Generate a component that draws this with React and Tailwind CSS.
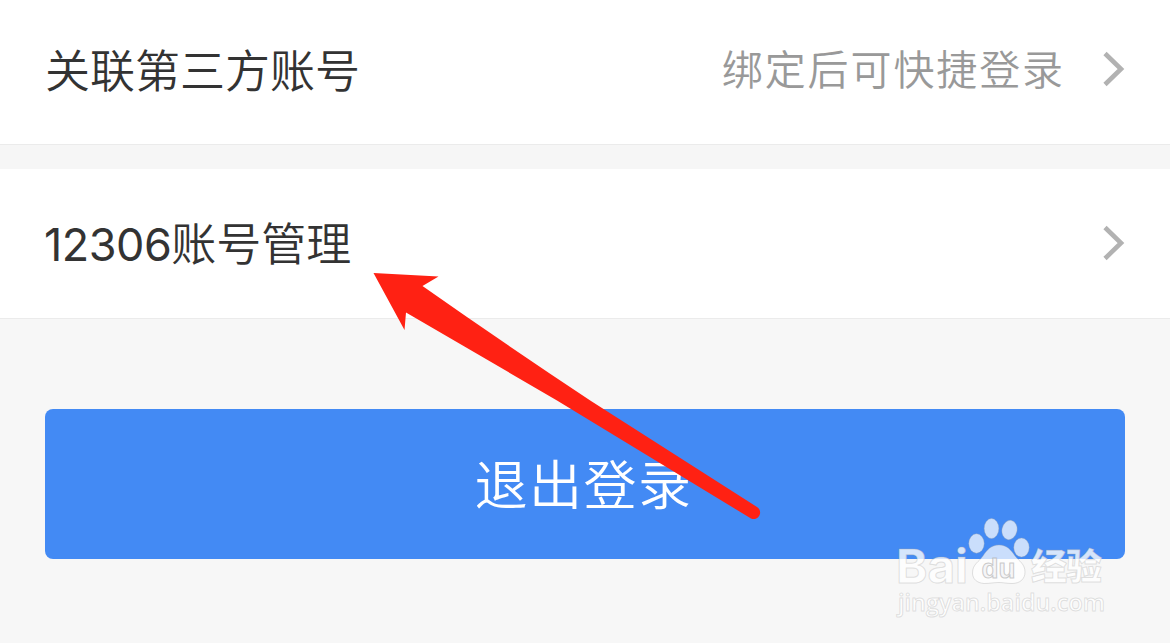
import React from "react";

function Chevron() {
  return (
    <svg className="mb-0.5 h-10 w-6 shrink-0" viewBox="0 0 24 40" fill="none" stroke="#b2b2b2" strokeWidth="4.6">
      <path d="M3 4.500 L19 20 L3 35.500" />
    </svg>
  );
}

function Row({ className, label, hint }) {
  return (
    <div className={`flex items-center justify-between border-b-[1.5px] border-[#ebebeb] bg-white pl-[45px] pr-[44px] ${className}`}>
      {label}
      <div className="flex items-center gap-[37px]">
        {hint}
        <Chevron />
      </div>
    </div>
  );
}

function Arrow() {
  return (
    <svg className="pointer-events-none absolute left-[360px] top-[260px] h-[270px] w-[410px]" viewBox="360 260 410 270">
      <path
        fill="#ff2113"
        d="M373.500 273 L438.500 276.500 L422.500 286 Q505 344 591 401 L757 507 A6.500 6.500 0 0 1 751 518.500 L557 400.500 L406 312.500 L404.500 330 Z"
      />
    </svg>
  );
}

function Watermark() {
  return (
    <svg
      className="pointer-events-none absolute left-[880px] top-[500px] h-[130px] w-[250px]"
      viewBox="880 500 250 130"
      fill="#fff"
      fillOpacity="0.72"
      stroke="#a9a9a9"
      strokeOpacity="0.35"
      strokeWidth="1"
    >
      <text x="896" y="582.500" fontFamily="Inter, sans-serif" fontWeight="700" fontSize="47" textLength="72" lengthAdjust="spacingAndGlyphs" fillOpacity="0.8">
        Bai
      </text>
      <ellipse cx="976.500" cy="543.500" rx="7.700" ry="9.700" />
      <ellipse cx="991.500" cy="528.500" rx="7.300" ry="10" />
      <ellipse cx="1009.500" cy="530" rx="7.500" ry="9.700" transform="rotate(12 1009.500 530)" />
      <ellipse cx="1021.500" cy="547.500" rx="7.700" ry="9.500" />
      <path d="M999 545 C1007 545 1011 550 1015 556 C1019 561 1025 564 1025 572 C1025 579 1020 583.500 1012 583.500 C1007 583.500 1003 582.500 999 582.500 C994 582.500 990 583.500 984 583.500 C977 583 972.500 579 972.500 573 C972.500 564 979 562 983 556 C987 550 991 545 999 545 Z" />
      <text x="981.500" y="577.500" fontFamily="Liberation Sans, sans-serif" fontWeight="700" fontSize="27" textLength="34" lengthAdjust="spacingAndGlyphs" fill="#f3f3f5" strokeOpacity="0.6">
        du
      </text>
      <text x="1031" y="580" fontFamily="Noto Sans CJK SC, sans-serif" fontWeight="900" fontSize="36" textLength="71" fillOpacity="0.8">
        经验
      </text>
      <text x="898" y="611" fontFamily="Open Sans, sans-serif" fontWeight="600" fontSize="24" textLength="207" lengthAdjust="spacingAndGlyphs" fillOpacity="0.9" strokeOpacity="0.35">
        jingyan.baidu.com
      </text>
    </svg>
  );
}

export default function App() {
  return (
    <div className="relative h-[643px] w-[1170px] overflow-hidden bg-[#f7f7f7] font-['Noto_Sans_CJK_SC',sans-serif] font-[350]">
      <Row
        className="h-[145px] pb-[5px]"
        label={<span className="pb-[3px] text-[45px] leading-none text-[#333]">关联第三方账号</span>}
        hint={<span className="pb-[4px] text-[41px] leading-none tracking-[1.900px] text-[#999]">绑定后可快捷登录</span>}
      />
      <div className="h-6 bg-[#f6f6f6]" />
      <Row
        className="h-[150px]"
        label={
          <span className="pb-[2px] text-[45px] leading-none text-[#333]">
            <span className="-ml-px font-['Inter',sans-serif] text-[45px] font-normal tracking-[-0.500px]">12306</span>账号管理
          </span>
        }
      />
      <button className="mx-[45px] mt-[90px] flex h-[150px] w-[1080px] items-center justify-center rounded-lg bg-[#438af4] pb-1 pr-[3px] text-[53px] leading-none tracking-[1.500px] text-white">
        退出登录
      </button>
      <Arrow />
      <Watermark />
    </div>
  );
}
